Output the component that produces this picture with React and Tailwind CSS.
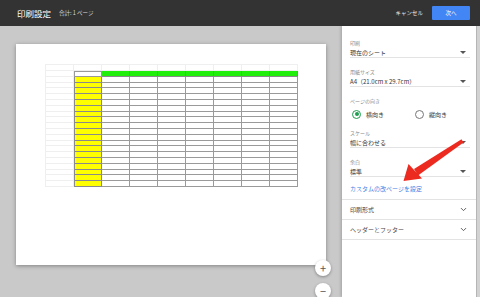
import { ChevronDown } from 'lucide-react';

const font = { fontFamily: '"Noto Sans CJK JP", "Noto Sans", sans-serif' };

function Caret() {
  return <span className="w-0 h-0 border-l-[3px] border-r-[3px] border-t-[3px] border-l-transparent border-r-transparent border-t-[#555]" />;
}

function Select({ label, value, last }) {
  return (
    <div className={last ? '' : 'mb-[10px]'}>
      <div className="h-[8px] leading-[8px] text-[5px] text-[#8a8a8a]">{label}</div>
      <div className="h-[11px] flex items-center justify-between pr-[4px] border-b border-[#e3e3e3] text-[6px] text-[#333]">
        <span>{value}</span>
        <Caret />
      </div>
    </div>
  );
}

function Radio({ checked, label }) {
  return (
    <div className="flex items-center gap-[5px]">
      <span
        className={
          checked
            ? 'w-[9px] h-[9px] rounded-full border-[1.5px] border-[#1e9e4e] flex items-center justify-center'
            : 'w-[9px] h-[9px] rounded-full border border-[#777]'
        }
      >
        {checked && <span className="w-[4px] h-[4px] rounded-full bg-[#1e9e4e]" />}
      </span>
      <span className="text-[6px] text-[#333]">{label}</span>
    </div>
  );
}

function Section({ title }) {
  return (
    <div className="h-[20px] flex items-center justify-between px-[8px] border-b border-[#e3e3e3] text-[6px] text-[#444]">
      <span>{title}</span>
      <ChevronDown size={9} strokeWidth={2.5} color="#555" />
    </div>
  );
}

function Sheet() {
  const cells = [];
  for (let r = 0; r < 21; r++) {
    for (let c = 0; c < 9; c++) {
      let cls = 'border-r border-b border-[#efefef]';
      if (r > 0 && c > 0) {
        if (r === 1 && c === 1) cls = 'bg-white border border-[#999]';
        else if (r === 1) cls = 'bg-[#22ee0c] border-r border-b border-[#8a8a8a]';
        else if (c === 1) cls = 'bg-[#ffff00] border-l border-r border-b border-[#8a8a8a]';
        else cls = 'bg-white border-r border-b border-[#9a9a9a]';
      }
      cells.push(<div key={`${r}-${c}`} className={cls} />);
    }
  }
  return (
    <div className="grid grid-cols-[repeat(9,28px)] grid-rows-[6px_repeat(20,minmax(0,1fr))] h-[123px] w-[253px] border-l border-t border-[#efefef]">
      {cells}
    </div>
  );
}

export default function App() {
  return (
    <div className="relative w-[480px] h-[297px] overflow-hidden flex flex-col bg-[#c9c9c9]" style={font}>
      {/* Header */}
      <header className="h-[26px] bg-[#333] flex items-center justify-between pl-[17px] pr-[10px] shrink-0">
        <div className="flex items-center gap-[8px]">
          <h1 className="text-[8.5px] text-white">印刷設定</h1>
          <span className="text-[5.5px] text-[#ddd]">合計: 1 ページ</span>
        </div>
        <div className="flex items-center gap-[9px]">
          <span className="text-[5.5px] text-[#eee]">キャンセル</span>
          <button className="w-[38px] h-[14px] bg-[#4285f4] text-white text-[5.5px] rounded-[1px]">次へ</button>
        </div>
      </header>

      <div className="flex flex-1 min-h-0">
        {/* Preview */}
        <div className="relative w-[342px] pl-[16px] pt-[18px]">
          <div className="w-[310px] h-[221px] bg-white shadow-[0_1px_4px_rgba(0,0,0,0.35)] pl-[29px] pt-[20px]">
            <Sheet />
          </div>
          <div className="absolute top-[234px] right-[11px] flex flex-col gap-[7px]">
            <button className="w-[16px] h-[16px] rounded-full bg-white shadow-[0_1px_3px_rgba(0,0,0,0.35)] flex items-center justify-center text-[#555] text-[11px] leading-none">+</button>
            <button className="w-[16px] h-[16px] rounded-full bg-white shadow-[0_1px_3px_rgba(0,0,0,0.35)] flex items-center justify-center text-[#555] text-[11px] leading-none">−</button>
          </div>
        </div>

        {/* Settings panel */}
        <aside className="w-[134px] bg-white shadow-[-1px_0_3px_rgba(0,0,0,0.2)] flex flex-col">
          <div className="pl-[8px] pr-[6px] pt-[13px]">
            <Select label="印刷" value="現在のシート" />
            <Select label="用紙サイズ" value="A4（21.0cm x 29.7cm）" />
            <div className="h-[8px] leading-[8px] text-[5px] text-[#8a8a8a]">ページの向き</div>
            <div className="h-[18px] flex items-center gap-[31px] pl-[2px] mb-[6px]">
              <Radio checked label="横向き" />
              <Radio label="縦向き" />
            </div>
            <Select label="スケール" value="幅に合わせる" />
            <Select label="余白" value="標準" last />
            <div className="h-[10px] mt-[7px] mb-[5px] leading-[10px] text-[6px] text-[#3f7fe6]">カスタムの改ページを設定</div>
          </div>
          <div className="border-t border-[#e3e3e3]">
            <Section title="印刷形式" />
            <Section title="ヘッダーとフッター" />
          </div>
        </aside>
        <div className="w-[4px] bg-[#d2d2d2] border-l border-[#b5b5b5]" />
      </div>

      {/* Red arrow annotation */}
      <svg className="absolute inset-0 pointer-events-none" width="480" height="297" viewBox="0 0 480 297">
        <polygon points="463.5,142.5 461.5,139.2 414,169 418,175.5" fill="#ec2a1f" />
        <polygon points="403.5,181 408.5,164 422,178.5" fill="#ec2a1f" />
      </svg>
    </div>
  );
}
